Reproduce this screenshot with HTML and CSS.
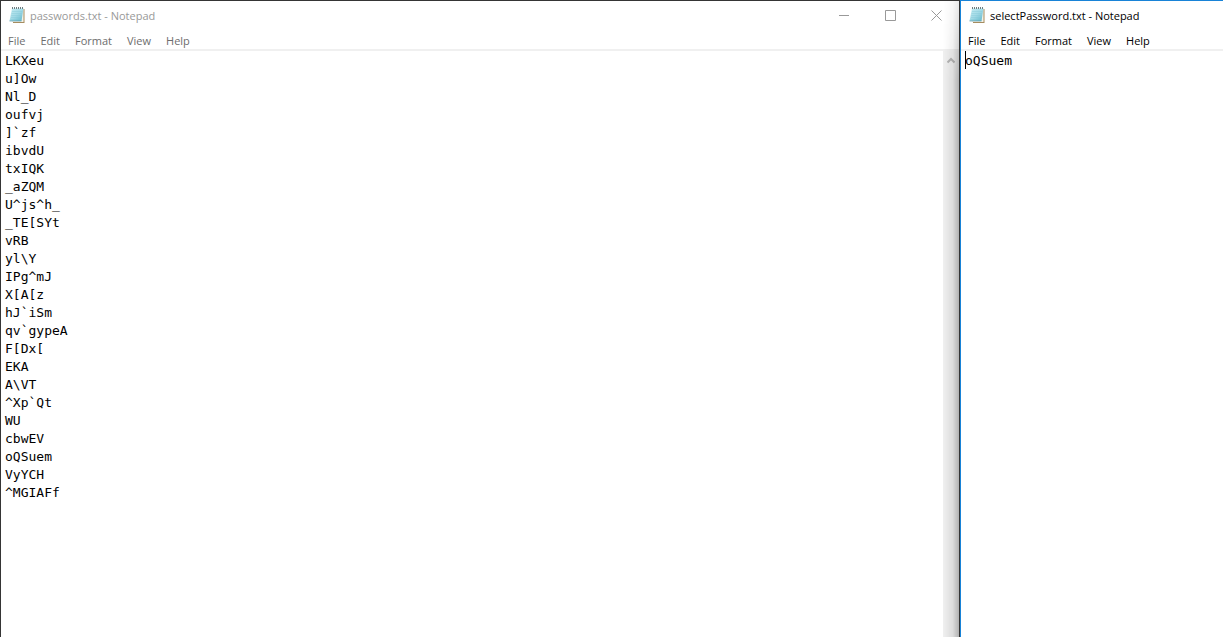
FILE: index.html
```html
<!DOCTYPE html>
<html lang="en">
<head>
  <meta charset="UTF-8">
  <meta name="viewport" content="width=device-width, initial-scale=1.0">
  <title>Notepad</title>
  <link rel="stylesheet" href="styles.css">
</head>
<body>
  <svg class="symbols" aria-hidden="true">
    <defs>
      <linearGradient id="page" x1="0" y1="0" x2="1" y2="1">
        <stop offset="0" stop-color="#c8edf3"></stop>
        <stop offset="0.5" stop-color="#a2dae6"></stop>
        <stop offset="1" stop-color="#5fb6ca"></stop>
      </linearGradient>
    </defs>
    <symbol id="notepad" viewBox="0 0 16 17">
      <path d="M4 2h11.5v14H4z" fill="#a58c5f"></path>
      <path d="M3 2h11.5v13H3z" fill="#f5f2e8"></path>
      <path d="M3 1.5h11.5L12.5 14H0.5z" fill="url(#page)"></path>
      <path d="M0.5 14h12" stroke="#5d9aa8" stroke-width="0.7"></path>
      <path d="M3 4.5h10M2.7 6.5h10M2.3 8.5h10M2 10.5h10M1.6 12.5h10" stroke="#83c8d6" stroke-width="0.4"></path>
      <path d="M3.5 0v2M5.5 0v2M7.5 0v2M9.5 0v2M11.5 0v2M13.5 0v2" stroke="#5d6e72" stroke-width="0.9"></path>
    </symbol>
  </svg>

  <div class="desktop">
    <section class="window inactive">
      <header class="title-bar">
        <svg class="app-icon"><use href="#notepad"></use></svg>
        <h1 class="title">passwords.txt - Notepad</h1>
        <div class="controls">
          <button class="control" aria-label="Minimize">
            <svg viewBox="0 0 11 11"><path d="M0 5.5h10"></path></svg>
          </button>
          <button class="control" aria-label="Maximize">
            <svg viewBox="0 0 11 11"><path d="M0.5 0.5h10v10h-10z"></path></svg>
          </button>
          <button class="control" aria-label="Close">
            <svg viewBox="0 0 11 11"><path d="M0.5 0.5l10 10M10.5 0.5l-10 10"></path></svg>
          </button>
        </div>
      </header>
      <nav class="menu">
        <button>File</button>
        <button>Edit</button>
        <button>Format</button>
        <button>View</button>
        <button>Help</button>
      </nav>
      <div class="editor">
        <textarea class="text" aria-label="passwords.txt" spellcheck="false">LKXeu
u]Ow
Nl_D
oufvj
]`zf
ibvdU
txIQK
_aZQM
U^js^h_
_TE[SYt
vRB
yl\Y
IPg^mJ
X[A[z
hJ`iSm
qv`gypeA
F[Dx[
EKA
A\VT
^Xp`Qt
WU
cbwEV
oQSuem
VyYCH
^MGIAFf</textarea>
        <div class="scrollbar">
          <button class="scroll-up" aria-label="Scroll up">
            <svg viewBox="0 0 8 7"><path d="M0.5 5.5L4 2l3.5 3.5"></path></svg>
          </button>
        </div>
      </div>
    </section>

    <section class="window active">
      <header class="title-bar">
        <svg class="app-icon"><use href="#notepad"></use></svg>
        <h1 class="title">selectPassword.txt - Notepad</h1>
      </header>
      <nav class="menu">
        <button>File</button>
        <button>Edit</button>
        <button>Format</button>
        <button>View</button>
        <button>Help</button>
      </nav>
      <div class="editor">
        <textarea class="text" aria-label="selectPassword.txt" spellcheck="false">oQSuem</textarea>
        <span class="caret"></span>
      </div>
    </section>
  </div>
</body>
</html>
```
FILE: styles.css
```css
* {
  box-sizing: border-box;
}

body {
  margin: 0;
  font-family: "Open Sans", "Noto Sans", sans-serif;
  font-size: 11px;
  color: #000;
  background: #fff;
}

button {
  padding: 0;
  border: none;
  background: none;
  font: inherit;
  color: inherit;
}

.symbols {
  position: absolute;
  width: 0;
  height: 0;
}

.desktop {
  display: flex;
  height: 100vh;
  overflow: hidden;
}

.window {
  display: flex;
  flex-direction: column;
  min-width: 0;
  background: #fff;
}

.inactive {
  position: relative;
  flex: 1;
  border: 1px solid #353535;
  border-bottom: none;
}

/* shadow cast by the window in front */
.inactive::after {
  content: "";
  position: absolute;
  top: 0;
  right: 0;
  bottom: 0;
  width: 16px;
  background: linear-gradient(to right, rgba(0, 0, 0, 0), rgba(0, 0, 0, 0.08) 60%, rgba(0, 0, 0, 0.26));
  mask-image: linear-gradient(to bottom, rgba(0, 0, 0, 0.3), #000 80px);
  pointer-events: none;
}

.active {
  flex: 0 0 263px;
  border-top: 1px solid #1883d7;
  border-left: 1px solid #1883d7;
}

.title-bar {
  display: flex;
  align-items: center;
  height: 30px;
  padding-left: 8px;
  padding-bottom: 2px;
}

.app-icon {
  width: 16px;
  height: 17px;
  margin-right: 5px;
}

.title {
  margin: 0;
  font-size: 11px;
  font-weight: normal;
  white-space: nowrap;
}

.inactive .title {
  color: #999;
}

.controls {
  display: flex;
  height: 100%;
  margin-left: auto;
}

.control {
  display: flex;
  align-items: center;
  justify-content: center;
  width: 46px;
}

.control svg {
  width: 11px;
  height: 11px;
  fill: none;
  stroke: #999;
}

.menu {
  display: flex;
  gap: 15px;
  height: 20px;
  padding-left: 7px;
  border-bottom: 2px solid #f0f0f0;
}

.inactive .menu {
  color: #6d6d6d;
}

.editor {
  position: relative;
  display: flex;
  flex: 1;
  min-height: 0;
}

.text {
  flex: 1;
  min-width: 0;
  margin: 0;
  padding: 1px 4px 0;
  border: none;
  outline: none;
  resize: none;
  overflow: hidden;
  font-family: "DejaVu Sans Mono", monospace;
  font-size: 13px;
  line-height: 18px;
  color: #000;
  background: #fff;
}

.scrollbar {
  width: 16px;
  background: #f0f0f0;
}

.scroll-up {
  display: flex;
  align-items: center;
  justify-content: center;
  width: 16px;
  height: 18px;
}

.scroll-up svg {
  width: 8px;
  height: 7px;
  fill: none;
  stroke: #b5b5b5;
  stroke-width: 2;
}

.caret {
  position: absolute;
  top: 0;
  left: 4px;
  width: 1px;
  height: 18px;
  background: #000;
}
```
